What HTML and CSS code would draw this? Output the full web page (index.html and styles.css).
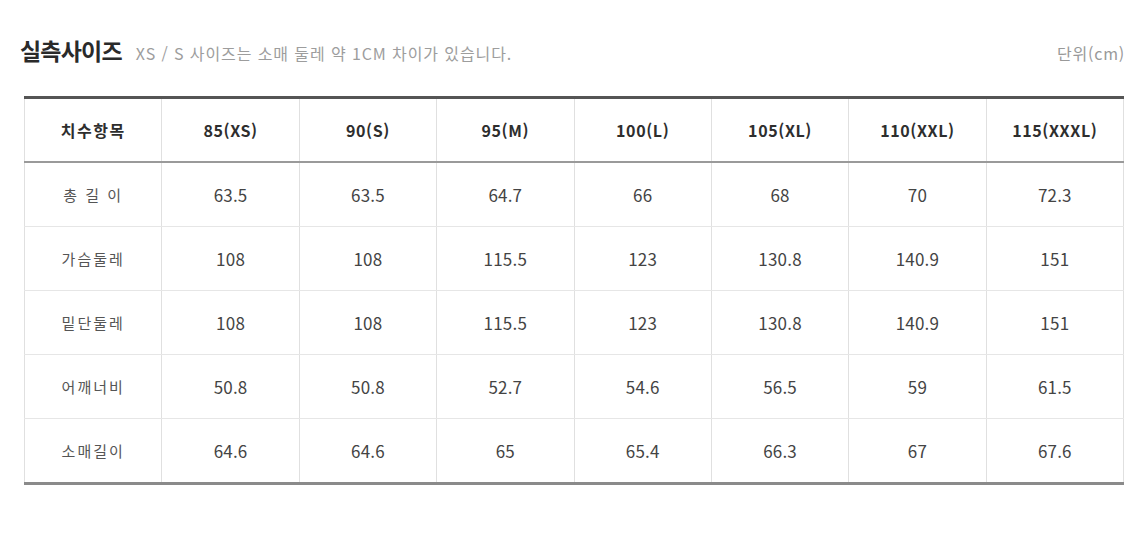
FILE: index.html
```html
<!DOCTYPE html>
<html lang="ko">
<head>
<meta charset="utf-8">
<link rel="stylesheet" href="styles.css">
</head>
<body>
<div class="page">
  <div class="heading">
    <h2 class="title">실측사이즈</h2>
    <span class="note">XS / S 사이즈는 소매 둘레 약 1CM 차이가 있습니다.</span>
    <span class="unit">단위(cm)</span>
  </div>
  <table class="size-table">
    <thead>
      <tr>
        <th class="label">치수항목</th><th>85(XS)</th><th>90(S)</th><th>95(M)</th><th>100(L)</th><th>105(XL)</th><th>110(XXL)</th><th>115(XXXL)</th>
      </tr>
    </thead>
    <tbody>
      <tr><td class="label">총 길 이</td><td>63.5</td><td>63.5</td><td>64.7</td><td>66</td><td>68</td><td>70</td><td>72.3</td></tr>
      <tr><td class="label">가슴둘레</td><td>108</td><td>108</td><td>115.5</td><td>123</td><td>130.8</td><td>140.9</td><td>151</td></tr>
      <tr><td class="label">밑단둘레</td><td>108</td><td>108</td><td>115.5</td><td>123</td><td>130.8</td><td>140.9</td><td>151</td></tr>
      <tr><td class="label">어깨너비</td><td>50.8</td><td>50.8</td><td>52.7</td><td>54.6</td><td>56.5</td><td>59</td><td>61.5</td></tr>
      <tr><td class="label">소매길이</td><td>64.6</td><td>64.6</td><td>65</td><td>65.4</td><td>66.3</td><td>67</td><td>67.6</td></tr>
    </tbody>
  </table>
</div>
</body>
</html>
```

FILE: styles.css
```css
html, body {
  margin: 0;
  padding: 0;
  background: #ffffff;
}

.page {
  font-family: "Noto Sans CJK KR", "Noto Sans", "Liberation Sans", sans-serif;
  color: #333;
  width: 1125px;
  height: 543px;
  overflow: hidden;
}

.heading {
  display: flex;
  align-items: baseline;
  padding: 35px 0 0 20px;
  height: 62px;
  box-sizing: border-box;
}

.title {
  margin: 0;
  font-size: 23px;
  line-height: 30px;
  font-weight: 700;
  color: #2a2a2a;
  letter-spacing: -0.8px;
}

.note {
  margin-left: 14px;
  font-size: 16px;
  color: #9d9d9d;
  letter-spacing: 0.9px;
}

.unit {
  margin-left: auto;
  font-size: 16px;
  color: #999;
  letter-spacing: 0.8px;
}

.size-table {
  margin: 34px 0 0 24px;
  width: 1100px;
  border-collapse: collapse;
  table-layout: fixed;
  border-top: 3px solid #555;
  border-bottom: 3px solid #8a8a8a;
  border-left: 1px solid #ddd;
  border-right: 1px solid #ddd;
}

.size-table th,
.size-table td {
  text-align: center;
  border-left: 1px solid #e0e0e0;
  border-right: 1px solid #e0e0e0;
  padding: 0;
}

.size-table th {
  height: 62px;
  font-size: 16px;
  font-weight: 700;
  color: #2e2e2e;
  border-bottom: 2px solid #9a9a9a;
  letter-spacing: 0.6px;
}

.size-table th.label {
  letter-spacing: 1.5px;
}

.size-table td {
  height: 63px;
  font-size: 17px;
  color: #444;
  border-bottom: 1px solid #e6e6e6;
  letter-spacing: 0.2px;
}

.size-table td.label {
  font-size: 15px;
  color: #555;
  letter-spacing: 2px;
}
```
